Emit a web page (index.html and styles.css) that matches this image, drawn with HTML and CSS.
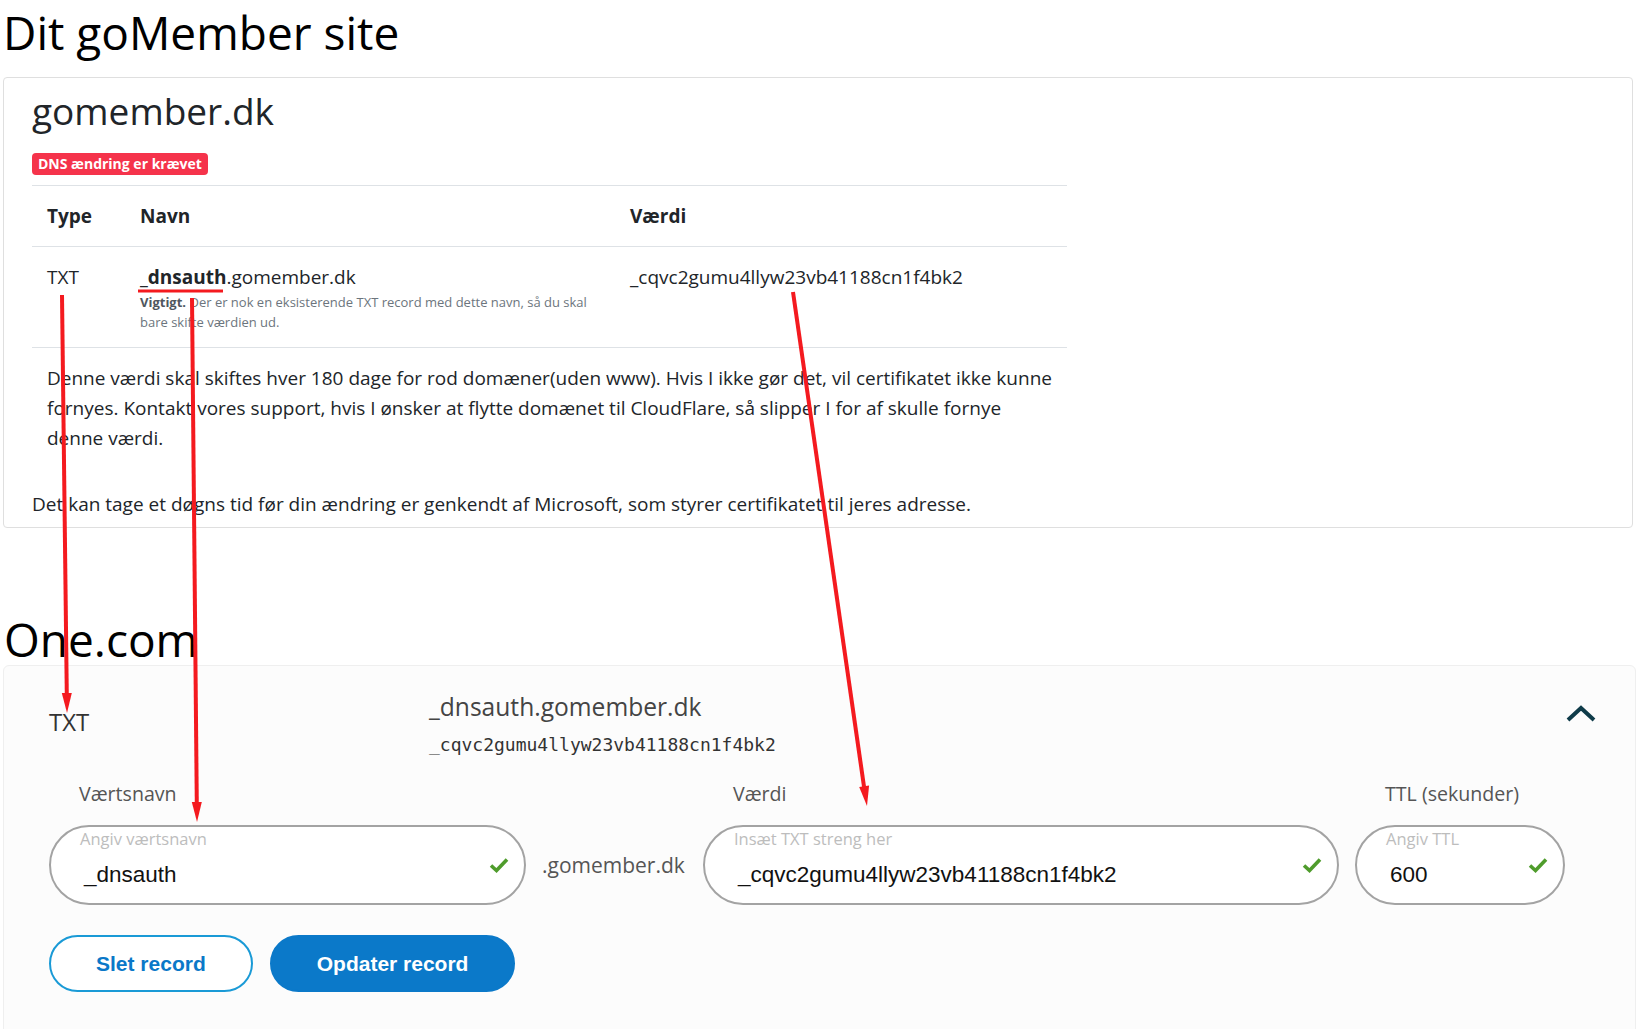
FILE: index.html
```html
<!DOCTYPE html>
<html>
<head>
	<meta charset="utf-8">
	<meta name="viewport" content="width=device-width, initial-scale=1">
	<title>DNS ændring - gomember.dk</title>
	<link rel="stylesheet" href="styles.css">
</head>
<body>
	<h1 class="page-title">Dit goMember site</h1>
	<div class="card">
		<h2 class="site-name">gomember.dk</h2>
		<div class="status"><span class="badge">DNS ændring er krævet</span></div>
		<table class="dns-table">
			<colgroup>
				<col class="col-type">
				<col class="col-name">
				<col class="col-value">
			</colgroup>
			<thead>
				<tr>
					<th>Type</th>
					<th>Navn</th>
					<th>Værdi</th>
				</tr>
			</thead>
			<tbody>
				<tr>
					<td>TXT</td>
					<td>
						<b>_dnsauth</b>.gomember.dk
						<div class="note"><b>Vigtigt.</b> Der er nok en eksisterende TXT record med dette navn, så du skal bare skifte værdien ud.</div>
					</td>
					<td>_cqvc2gumu4llyw23vb41188cn1f4bk2</td>
				</tr>
				<tr>
					<td colspan="3">Denne værdi skal skiftes hver 180 dage for rod domæner(uden www). Hvis I ikke gør det, vil certifikatet ikke kunne<br>fornyes. Kontakt vores support, hvis I ønsker at flytte domænet til CloudFlare, så slipper I for af skulle fornye<br>denne værdi.</td>
				</tr>
			</tbody>
		</table>
		<p class="footnote">Det kan tage et døgns tid før din ændring er genkendt af Microsoft, som styrer certifikatet til jeres adresse.</p>
	</div>

	<h1 class="page-title one">One.com</h1>
	<div class="record">
		<div class="record-head">
			<div class="record-type">TXT</div>
			<div class="record-info">
				<div class="record-host">_dnsauth.gomember.dk</div>
				<div class="record-value">_cqvc2gumu4llyw23vb41188cn1f4bk2</div>
			</div>
			<svg class="chevron" width="30" height="18" viewBox="0 0 30 18">
				<polyline points="2,15 15,3 28,15" fill="none" stroke="#0f3b49" stroke-width="4"/>
			</svg>
		</div>

		<div class="fields">
			<div class="field-label">Værtsnavn</div>
			<div></div>
			<div class="field-label">Værdi</div>
			<div class="field-label">TTL (sekunder)</div>

			<div class="pill">
				<div class="pill-text">
					<div class="pill-hint">Angiv værtsnavn</div>
					<div class="pill-value">_dnsauth</div>
				</div>
				<svg class="check" width="20" height="16" viewBox="0 0 20 16"><path d="M2 8.5 L7.5 13.5 L18 2.5" fill="none" stroke="#4f9c2c" stroke-width="3.6"/></svg>
			</div>
			<div class="suffix">.gomember.dk</div>
			<div class="pill">
				<div class="pill-text">
					<div class="pill-hint">Insæt TXT streng her</div>
					<div class="pill-value">_cqvc2gumu4llyw23vb41188cn1f4bk2</div>
				</div>
				<svg class="check" width="20" height="16" viewBox="0 0 20 16"><path d="M2 8.5 L7.5 13.5 L18 2.5" fill="none" stroke="#4f9c2c" stroke-width="3.6"/></svg>
			</div>
			<div class="pill">
				<div class="pill-text">
					<div class="pill-hint">Angiv TTL</div>
					<div class="pill-value">600</div>
				</div>
				<svg class="check" width="20" height="16" viewBox="0 0 20 16"><path d="M2 8.5 L7.5 13.5 L18 2.5" fill="none" stroke="#4f9c2c" stroke-width="3.6"/></svg>
			</div>
		</div>

		<div class="actions">
			<button class="btn btn-outline">Slet record</button>
			<button class="btn btn-primary">Opdater record</button>
		</div>
	</div>

	<!-- red markings drawn on top of the screenshot -->
	<svg class="annotations" width="1639" height="1029" viewBox="0 0 1639 1029">
		<g stroke="#f41a1f" stroke-width="4" fill="none">
			<line x1="138" y1="291" x2="223" y2="291" stroke-width="3"/>
			<line x1="62" y1="295" x2="66.8" y2="695"/>
			<line x1="192" y1="298" x2="196.8" y2="804"/>
			<line x1="793" y1="292" x2="864.2" y2="788"/>
		</g>
		<g fill="#f41a1f">
			<polygon points="67,713 71.8,693 61.8,693"/>
			<polygon points="197,822 201.8,802 191.8,802"/>
			<polygon points="867,806 869.1,785.5 859.2,786.9"/>
		</g>
	</svg>
</body>
</html>
```

FILE: styles.css
```css
body {
	margin: 0;
	font-family: "Open Sans", "Noto Sans", sans-serif;
	color: #212529;
	background: #fff;
}

.page-title {
	font-size: 46px;
	line-height: 46px;
	font-weight: 400;
	color: #000;
	margin: 9px 0 22px 3px;
}
.page-title.one {
	margin: 88px 0 3px 4px;
}

/* goMember card */
.card {
	margin-left: 3px;
	width: 1630px;
	box-sizing: border-box;
	border: 1px solid #dfdfdf;
	border-radius: 4px;
	padding: 11px 28px 8px 28px;
}
.site-name {
	font-size: 37px;
	line-height: 44px;
	font-weight: 400;
	margin: 0 0 20px 0;
}
.status {
	display: flex;
	margin-bottom: 10px;
}
.badge {
	background: #f5334b;
	color: #fff;
	font-weight: 700;
	font-size: 14px;
	line-height: 16px;
	padding: 3px 6px;
	border-radius: 4px;
}
.dns-table {
	width: 1035px;
	border-collapse: collapse;
	table-layout: fixed;
	font-size: 19px;
	line-height: 30px;
}
.col-type { width: 93px; }
.col-name { width: 490px; }
.col-value { width: 452px; }
.dns-table th,
.dns-table td {
	border-top: 1px solid #dee2e6;
	padding: 15px;
	text-align: left;
	vertical-align: top;
}
.dns-table th {
	font-weight: 700;
}
.note {
	font-size: 13px;
	line-height: 20px;
	color: #6c757d;
}
.note b {
	color: #50575e;
}
.footnote {
	margin: 21px 0 0 0;
	font-size: 19px;
	line-height: 30px;
}

/* One.com record panel */
.record {
	margin-left: 3px;
	width: 1633px;
	box-sizing: border-box;
	border: 1px solid #efefef;
	border-radius: 6px;
	background: #fcfcfc;
	padding: 26px 39px 60px 45px;
	color: #444;
}
.record-head {
	display: flex;
	align-items: flex-start;
}
.record-type {
	width: 380px;
	margin-top: 15px;
	font-size: 24px;
	line-height: 30px;
	color: #333;
}
.record-host {
	font-size: 24.6px;
	line-height: 30px;
	color: #444;
}
.record-value {
	margin-top: 11px;
	font-family: "DejaVu Sans Mono", "Liberation Mono", monospace;
	font-size: 18px;
	line-height: 24px;
	color: #333;
}
.chevron {
	margin-left: auto;
	margin-top: 13px;
}

.fields {
	display: grid;
	grid-template-columns: 477px 145px 636px 210px;
	column-gap: 16px;
	row-gap: 19px;
	margin-top: 25px;
}
.field-label {
	padding-left: 30px;
	font-size: 19.6px;
	line-height: 24px;
	color: #555;
}
.pill {
	height: 80px;
	box-sizing: border-box;
	border: 2px solid #a3a3a3;
	border-radius: 40px;
	background: #fff;
	display: flex;
	align-items: center;
	padding: 0 15px 0 29px;
}
.pill-text {
	flex: 1;
	align-self: stretch;
	padding-top: 3px;
}
.pill-hint {
	font-size: 16.5px;
	line-height: 18px;
	color: #bdbdbd;
}
.pill-value {
	margin-top: 13px;
	margin-left: 4px;
	font-family: "Liberation Sans", Arial, sans-serif;
	font-size: 22.5px;
	line-height: 28px;
	color: #111;
}
.suffix {
	align-self: center;
	font-size: 21px;
	line-height: 28px;
	color: #555;
}

.actions {
	display: flex;
	gap: 17px;
	margin-top: 30px;
}
.btn {
	height: 57px;
	box-sizing: border-box;
	border-radius: 29px;
	border: 2px solid #1a9ad6;
	padding: 0 45px;
	font-family: "Liberation Sans", Arial, sans-serif;
	font-size: 21px;
	font-weight: 700;
}
.btn-outline {
	background: #fff;
	color: #0a78c8;
}
.btn-primary {
	background: #0b79c9;
	border-color: #0b79c9;
	color: #fff;
}

.annotations {
	position: absolute;
	top: 0;
	left: 0;
	pointer-events: none;
}
```
